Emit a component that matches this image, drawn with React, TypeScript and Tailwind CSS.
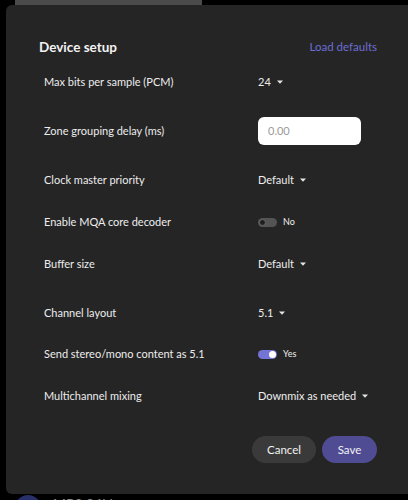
import React from "react"

type Row = {
  label: string
  kind: "select" | "input" | "toggle"
  value?: string
  on?: boolean
  gap: string
}

const rows: Row[] = [
  { label: "Max bits per sample (PCM)", kind: "select", value: "24", gap: "mt-[11px]" },
  { label: "Zone grouping delay (ms)", kind: "input", gap: "mt-[21px]" },
  { label: "Clock master priority", kind: "select", value: "Default", gap: "mt-[21px]" },
  { label: "Enable MQA core decoder", kind: "toggle", on: false, gap: "mt-[14px]" },
  { label: "Buffer size", kind: "select", value: "Default", gap: "mt-[14px]" },
  { label: "Channel layout", kind: "select", value: "5.1", gap: "mt-[21px]" },
  { label: "Send stereo/mono content as 5.1", kind: "toggle", on: true, gap: "mt-[13px]" },
  { label: "Multichannel mixing", kind: "select", value: "Downmix as needed", gap: "mt-[14px]" },
]

function Caret() {
  return (
    <svg width="6" height="4" viewBox="0 0 6 4" className="ml-[6px]">
      <path d="M0 0.5 L6 0.5 L3 3.8 Z" fill="#e6e6e6" />
    </svg>
  )
}

function Control({ row }: { row: Row }) {
  if (row.kind === "input") {
    return (
      <div className="w-[103px] h-[28px] rounded-[6px] bg-white flex items-center pl-[10px] text-[11px] text-[#9a9a9a]">
        0.00
      </div>
    )
  }
  if (row.kind === "toggle") {
    return (
      <div className="flex items-center">
        {row.on ? (
          <div className="w-[19px] h-[9px] rounded-full bg-[#7474d6] flex items-center justify-end pr-[1px]">
            <div className="w-[7px] h-[7px] rounded-full bg-white" />
          </div>
        ) : (
          <div className="w-[19px] h-[9px] rounded-full bg-[#545454] flex items-center pl-[1px]">
            <div className="w-[7px] h-[7px] rounded-full bg-[#1e1e1e] border border-[#6a6a6a]" />
          </div>
        )}
        <span className="ml-[6px] text-[9px] text-[#f0f0f0]">{row.on ? "Yes" : "No"}</span>
      </div>
    )
  }
  return (
    <div className="flex items-center text-[11px] text-[#ededed]">
      <span>{row.value}</span>
      <Caret />
    </div>
  )
}

export default function App() {
  return (
    <div
      className="w-[408px] h-[500px] bg-black overflow-hidden"
      style={{ fontFamily: "Lato, 'Noto Sans', sans-serif" }}
    >
      <div className="ml-[15px] w-[187px] h-[5px] bg-[#4b4b4b]" />

      <div className="ml-[6px] w-[420px] h-[489px] bg-[#252525] rounded-l-[6px] pt-[32px] pl-[33px] pr-[49px]">
        <div className="flex items-center justify-between h-[20px]">
          <h2 className="text-[13.5px] font-bold text-[#f2f2f2]">Device setup</h2>
          <span className="text-[11.5px] text-[#6d6dd4]">Load defaults</span>
        </div>

        <div className="flex flex-col pl-[5px]">
          {rows.map((row) => (
            <div key={row.label} className={`flex items-center h-[28px] ${row.gap}`}>
              <span className="w-[214px] text-[11px] text-[#ededed]">{row.label}</span>
              <Control row={row} />
            </div>
          ))}
        </div>

        <div className="flex justify-end gap-[6px] mt-[26px]">
          <button className="w-[64px] h-[27px] rounded-full bg-[#3a3a3a] text-[11.5px] text-[#f2f2f2]">
            Cancel
          </button>
          <button className="w-[55px] h-[27px] rounded-full bg-[#4f4c94] text-[11.5px] text-[#f2f2f2]">
            Save
          </button>
        </div>
      </div>

      <div className="flex items-start pl-[15px] gap-[12px] mt-[1px]">
        <div className="w-[26px] h-[26px] rounded-full bg-[#27306b]" />
        <span className="-mt-[1px] text-[14px] leading-[20px] text-[#8c8c8c]">MP3 96kbps</span>
      </div>
    </div>
  )
}
